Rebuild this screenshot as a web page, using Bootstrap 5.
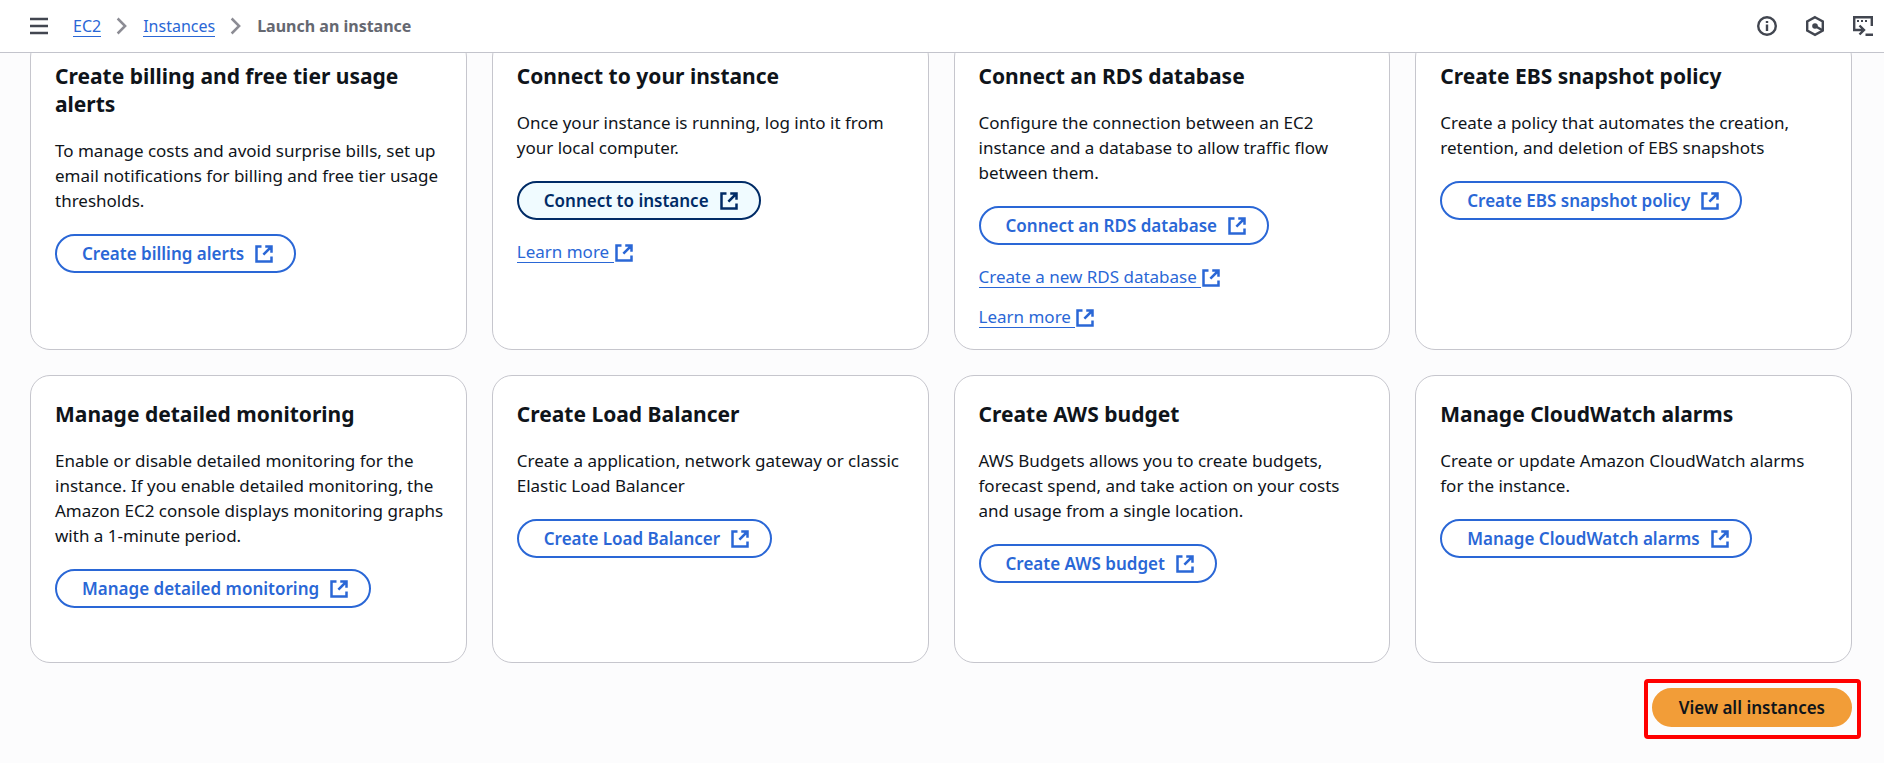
<!DOCTYPE html>
<html lang="en">
<head>
<meta charset="utf-8">
<meta name="viewport" content="width=device-width, initial-scale=1">
<title>Launch an instance | EC2</title>
<link href="https://cdn.jsdelivr.net/npm/bootstrap@5.3.0/dist/css/bootstrap.min.css" rel="stylesheet">
<style>
  body { font: 400 17px/25px "Noto Sans", "Open Sans", sans-serif; color: #0f141a; background: #fcfcfd; }
  a { color: #2a67d6; }
  .topbar { height: 53px; padding: 0 10px 0 26px; border-bottom: 1px solid #c3c4cc; z-index: 10; }
  .icon-btn { border: 0; background: none; padding: 0; color: #424650; line-height: 0; }
  .crumbs { gap: 11px; margin-left: 21px; font-size: 16px; }
  .crumbs svg { color: #8c8c94; }
  .crumbs a, .ext-link span { text-decoration: none; border-bottom: 1px solid currentColor; line-height: 20px; }
  .crumbs .current { color: #656871; font-weight: 700; }
  .tools { gap: 26px; }
  .steps-area { margin-top: -16px; padding: 0 32px 24px 30px; }
  .step-grid { display: grid; grid-template-columns: repeat(4, minmax(0, 1fr)); gap: 25px; }
  .step-card { border: 1px solid #c6c6cd; border-radius: 20px; background: #fff; padding: 24px 21px 19px 24px; min-height: 288px; }
  .step-card h2 { font-size: 21px; line-height: 28px; font-weight: 700; margin: 0 0 20px; }
  .step-card p { margin: 0 0 21px; }
  .pill { display: flex; align-items: center; gap: 10px; height: 39px; padding: 0 20px 0 25px; border: 2px solid #2a67d6; border-radius: 20px; background: #fff; color: #2a67d6; font-weight: 600; line-height: 25px; white-space: nowrap; }
  .pill.hovered { color: #002b66; border-color: #002b66; background: #f0fbff; }
  .pill.primary { background: #f29d38; border-color: #f29d38; color: #0f141a; padding: 0 25px; }
  .step-links { display: flex; flex-direction: column; gap: 15px; margin-top: 20px; align-items: flex-start; }
  .ext-link { display: flex; align-items: center; height: 25px; text-decoration: none; }
  .ext-link span { white-space: pre; }
  .marked { border: 4px solid #f00; border-radius: 4px; padding: 5px 5px 8px 4px; margin: 16px -9px 0 0; }
  @media (max-width: 1100px) { .step-grid { grid-template-columns: repeat(2, minmax(0, 1fr)); } }
</style>
</head>
<body>
<svg class="d-none" aria-hidden="true">
  <symbol id="ext" viewBox="0 0 16 16"><path d="M9 2h5v5M14 2L7.500 8.500M6 2H2v12h12v-4" fill="none" stroke="currentColor" stroke-width="2"/></symbol>
  <symbol id="chev" viewBox="0 0 16 16"><path d="M4.500 2l6 6-6 6" fill="none" stroke="currentColor" stroke-width="2"/></symbol>
</svg>
<header class="topbar sticky-top bg-white d-flex align-items-center justify-content-between">
  <div class="d-flex align-items-center">
    <button class="icon-btn" type="button" aria-label="Open navigation"><svg width="26" height="20" viewBox="0 0 26 20"><path d="M4 3h18M4 10h18M4 17h18" stroke="currentColor" stroke-width="2.500"/></svg></button>
    <nav class="crumbs d-flex align-items-center" aria-label="Breadcrumb">
      <a href="#">EC2</a>
      <svg width="20" height="20"><use href="#chev"/></svg>
      <a href="#">Instances</a>
      <svg width="20" height="20"><use href="#chev"/></svg>
      <span class="current">Launch an instance</span>
    </nav>
  </div>
  <div class="d-flex align-items-center tools">
    <button class="icon-btn" type="button" aria-label="Info"><svg width="22" height="22" viewBox="0 0 22 22"><circle cx="11" cy="11" r="8.800" fill="none" stroke="currentColor" stroke-width="2.400"/><path d="M11 9.500v6.500M11 6v2" stroke="currentColor" stroke-width="2.400"/></svg></button>
    <button class="icon-btn" type="button" aria-label="Amazon Q"><svg width="22" height="22" viewBox="0 0 22 22"><path d="M11 2.200l7.800 4.300v9L11 19.800l-7.800-4.300v-9z" fill="none" stroke="currentColor" stroke-width="2.400"/><circle cx="11" cy="11" r="2.800" fill="currentColor"/><path d="M11 11l7 4" stroke="currentColor" stroke-width="2.400"/></svg></button>
    <button class="icon-btn" type="button" aria-label="CloudShell"><svg width="22" height="22" viewBox="0 0 22 22"><path d="M19.800 11V2.200H2.200v12.800H11M7.500 10.500L12 15l-4.500 4.500M13.500 19.800H21" fill="none" stroke="currentColor" stroke-width="2.400"/><path d="M5 6h2M9 6h2M13 6h2" stroke="currentColor" stroke-width="2"/></svg></button>
  </div>
</header>
<main class="steps-area">
  <div class="step-grid">
    <section class="step-card"><h2>Create billing and free tier usage alerts</h2><p>To manage costs and avoid surprise bills, set up email notifications for billing and free tier usage thresholds.</p>
      <button class="pill" type="button">Create billing alerts <svg width="20" height="20"><use href="#ext"/></svg></button></section>
    <section class="step-card"><h2>Connect to your instance</h2><p>Once your instance is running, log into it from your local computer.</p>
      <button class="pill hovered" type="button">Connect to instance <svg width="20" height="20"><use href="#ext"/></svg></button>
      <div class="step-links"><a class="ext-link" href="#"><span>Learn more </span><svg width="20" height="20"><use href="#ext"/></svg></a></div></section>
    <section class="step-card"><h2>Connect an RDS database</h2><p>Configure the connection between an EC2 instance and a database to allow traffic flow between them.</p>
      <button class="pill" type="button">Connect an RDS database <svg width="20" height="20"><use href="#ext"/></svg></button>
      <div class="step-links"><a class="ext-link" href="#"><span>Create a new RDS database </span><svg width="20" height="20"><use href="#ext"/></svg></a><a class="ext-link" href="#"><span>Learn more </span><svg width="20" height="20"><use href="#ext"/></svg></a></div></section>
    <section class="step-card"><h2>Create EBS snapshot policy</h2><p>Create a policy that automates the creation, retention, and deletion of EBS snapshots</p>
      <button class="pill" type="button">Create EBS snapshot policy <svg width="20" height="20"><use href="#ext"/></svg></button></section>
    <section class="step-card"><h2>Manage detailed monitoring</h2><p>Enable or disable detailed monitoring for the instance. If you enable detailed monitoring, the Amazon EC2 console displays monitoring graphs with a 1-minute period.</p>
      <button class="pill" type="button">Manage detailed monitoring <svg width="20" height="20"><use href="#ext"/></svg></button></section>
    <section class="step-card"><h2>Create Load Balancer</h2><p>Create a application, network gateway or classic Elastic Load Balancer</p>
      <button class="pill" type="button">Create Load Balancer <svg width="20" height="20"><use href="#ext"/></svg></button></section>
    <section class="step-card"><h2>Create AWS budget</h2><p>AWS Budgets allows you to create budgets, forecast spend, and take action on your costs and usage from a single location.</p>
      <button class="pill" type="button">Create AWS budget <svg width="20" height="20"><use href="#ext"/></svg></button></section>
    <section class="step-card"><h2>Manage CloudWatch alarms</h2><p>Create or update Amazon CloudWatch alarms for the instance.</p>
      <button class="pill" type="button">Manage CloudWatch alarms <svg width="20" height="20"><use href="#ext"/></svg></button></section>
  </div>
  <div class="d-flex justify-content-end"><div class="marked d-flex"><button class="pill primary" type="button">View all instances</button></div></div>
</main>
<script src="https://cdn.jsdelivr.net/npm/bootstrap@5.3.0/dist/js/bootstrap.bundle.min.js"></script>
</body>
</html>
